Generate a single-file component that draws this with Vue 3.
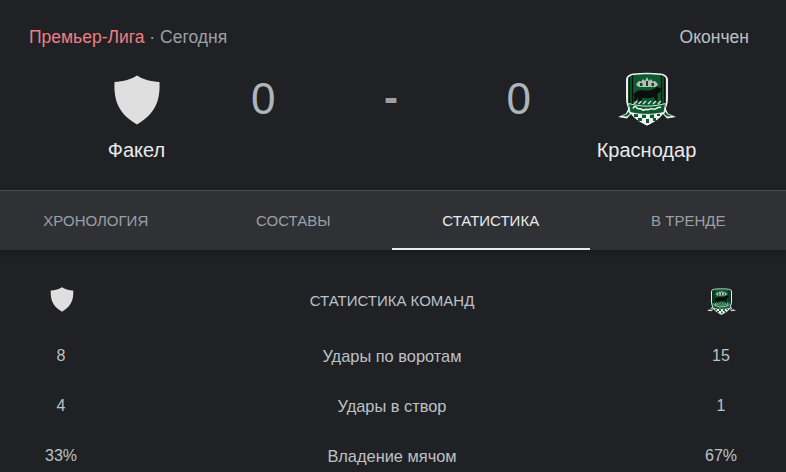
<script setup>
const tabs = [
  { label: 'Хронология' },
  { label: 'Составы' },
  { label: 'Статистика', active: true },
  { label: 'В тренде' },
]
const rows = [
  { home: '8', name: 'Удары по воротам', away: '15' },
  { home: '4', name: 'Удары в створ', away: '1' },
  { home: '33%', name: 'Владение мячом', away: '67%' },
]
</script>

<template>
  <div class="page">
    <svg class="defs" width="0" height="0" aria-hidden="true">
      <defs>
        <symbol id="shield" viewBox="0 0 46 50">
          <path d="M23 0.500C28 4 37 6.500 45.500 7C46 20 45 37 23 49.500C1 37 0 20 0.500 7C9 6.500 18 4 23 0.500Z" fill="#dfdfdf" />
        </symbol>
        <symbol id="crest" viewBox="0 0 58 54">
          <path d="M8 7C9 3 12 2 15 1.500C24 0.500 34 0.500 43 1.500C46 2 49 3 50 7L50 26C50 36 45 46 29 53.500C13 46 8 36 8 26Z" fill="#ededed" />
          <path d="M10 7C11 4 13 3 16 3C24 2 34 2 42 3C45 3 47 4 48 7V35H10Z" fill="#0a5a30" />
          <path d="M11.500 5V33M14.500 3.500V33M43.500 3.500V33M46.500 5V33" stroke="#0c0c0c" stroke-width="1.300" fill="none" />
          <path d="M18 13C20 9 22 8 23 10L25 7L27 9L29 5L31 9L33 7L35 10C36 8 38 9 40 13L37 15H21Z" fill="#b4c0b8" />
          <path d="M22 11h2.500v3H22zM28 9h2v5h-2zM33.500 11H36v3h-2.500z" fill="#1c3f2b" />
          <path d="M15 23C17 19 22 17.500 27 18.500C31 19 34.500 18 37.500 16L39.500 14.500L43.500 17L41.500 20.500L39.500 22V29H37L36 25C32 26.500 28 26.500 24.500 25.500L23.500 29H20.500L20 25L17.500 29H15.500L16.500 24Z" fill="#0d0d0d" />
          <path d="M16 32L19 29M20.500 32L23.500 29M25 32L28 29M30 32L33 29M35 32L38 29M40 32L43 29" stroke="#e4e4e4" stroke-width="1.200" fill="none" />
          <path d="M10 35H48L47 38C44 46 36 50 29 53.500C22 50 14 46 11 38Z" fill="#f0f0f0" />
          <path d="M16 42h4v3h-4zM24 42h4v4h-4zM32 42h4v4h-4zM39 42h3v2h-3zM20 46h4v3h-4zM28 47h3v4h-3zM35 46h3v3h-3z" fill="#0a5a30" />
          <path d="M0 45L8 41.500L12 33L14 41L9 46.500Z" fill="#f0f0f0" />
          <path d="M58 45L50 41.500L46 33L44 41L49 46.500Z" fill="#f0f0f0" />
          <path d="M4 44L9 42L10.500 39.500L12 42L9 44.500Z" fill="#0a5a30" />
          <path d="M54 44L49 42L47.500 39.500L46 42L49 44.500Z" fill="#0a5a30" />
          <path d="M10.500 31.500C23 35 35 35 47.500 31.500L46 40.500C34 43 24 43 12 40.500Z" fill="#0a5a30" stroke="#f0f0f0" stroke-width="0.900" />
          <path d="M15 36.500C16 33.500 18 34 19 36S22 35.500 24 37.500S27 36.500 29 37.500S33 35.500 35 37S39 34.500 43 35.500" stroke="#f6f6f6" stroke-width="1.500" fill="none" />
        </symbol>
      </defs>
    </svg>

    <header class="match">
      <div class="meta">
        <span class="when"><span class="league">Премьер-Лига</span> · Сегодня</span>
        <span class="status">Окончен</span>
      </div>
      <div class="teams">
        <div class="team">
          <svg class="logo shield-big"><use href="#shield" /></svg>
          <span class="team-name">Факел</span>
        </div>
        <div class="scores">
          <span class="score">0</span>
          <span class="dash">-</span>
          <span class="score">0</span>
        </div>
        <div class="team team-away">
          <svg class="logo crest-big"><use href="#crest" /></svg>
          <span class="team-name">Краснодар</span>
        </div>
      </div>
    </header>

    <nav class="tabs">
      <div v-for="tab in tabs" :key="tab.label" class="tab" :class="{ active: tab.active }">{{ tab.label }}</div>
    </nav>

    <section class="stats">
      <div class="row head">
        <svg class="shield-small"><use href="#shield" /></svg>
        <span class="name">Статистика команд</span>
        <svg class="crest-small"><use href="#crest" /></svg>
      </div>
      <div v-for="row in rows" :key="row.name" class="row">
        <span>{{ row.home }}</span>
        <span class="name">{{ row.name }}</span>
        <span>{{ row.away }}</span>
      </div>
    </section>
  </div>
</template>

<style>
html, body { margin: 0; background: #202124; overflow: hidden; }
</style>

<style scoped>
.page {
  width: 786px;
  height: 472px;
  overflow: hidden;
  background: #202124;
  font-family: "Liberation Sans", Arial, sans-serif;
  color: #bdc1c6;
}
.defs { position: absolute; }
.match {
  height: 190px;
  padding: 25px 37px 0 29px;
  box-sizing: border-box;
}
.meta {
  display: flex;
  justify-content: space-between;
  line-height: 24px;
  font-size: 17.5px;
  color: #9aa0a6;
}
.league { color: #ee7f84; }
.status { color: #bdc1c6; }
.teams {
  display: grid;
  grid-template-columns: 215px 1fr 220px;
  padding-top: 13px;
}
.team {
  display: flex;
  flex-direction: column;
  align-items: center;
}
.team-away { padding-left: 15px; }
.logo { display: block; }
.shield-big { width: 46px; height: 50px; margin-top: 13px; }
.crest-big { width: 58px; height: 54px; margin-top: 10px; margin-bottom: -1px; }
.team-name {
  margin-top: 12px;
  font-size: 20px;
  line-height: 26px;
  color: #e8eaed;
}
.scores {
  display: grid;
  grid-template-columns: 1fr 1fr 1fr;
  margin: 0 -2px 0 7px;
  font-size: 44px;
  line-height: 54px;
  color: #9aa0a6;
}
.scores > span:first-child { justify-self: start; }
.scores > span:nth-child(2) { justify-self: center; }
.scores > span:last-child { justify-self: end; }
.score { color: #adb5bb; padding-top: 10px; }
.dash { color: #9aa0a6; font-weight: 700; font-size: 42px; padding-top: 9px; }
.tabs {
  display: grid;
  grid-template-columns: repeat(4, 1fr);
  width: 790px;
  margin-left: -3px;
  height: 60px;
  box-sizing: border-box;
  border-top: 1px solid #4b4c50;
  background: #303134;
  box-shadow: 0 3px 6px rgba(0, 0, 0, 0.25);
}
.tab {
  display: flex;
  align-items: center;
  justify-content: center;
  padding-top: 2px;
  box-sizing: border-box;
  font-size: 15px;
  text-transform: uppercase;
  color: #9aa0a6;
  border-bottom: 2px solid transparent;
}
.tab.active {
  color: #e8eaed;
  border-bottom-color: #e8eaed;
}
.stats { padding-top: 24px; }
.row {
  display: grid;
  grid-template-columns: 94px 1fr 90px;
  align-items: center;
  justify-items: center;
  height: 50px;
  padding: 0 20px 0 14px;
  font-size: 16px;
  line-height: 20px;
  color: #bdc1c6;
}
.row .name { font-size: 16.4px; }
.row.head { height: 54px; margin-bottom: 3px; }
.row.head .name { font-size: 15px; text-transform: uppercase; }
.shield-small { width: 24px; height: 25px; display: block; margin: 0 0 3px 2px; }
.crest-small { width: 29px; height: 29px; display: block; margin-left: 1px; }
</style>
